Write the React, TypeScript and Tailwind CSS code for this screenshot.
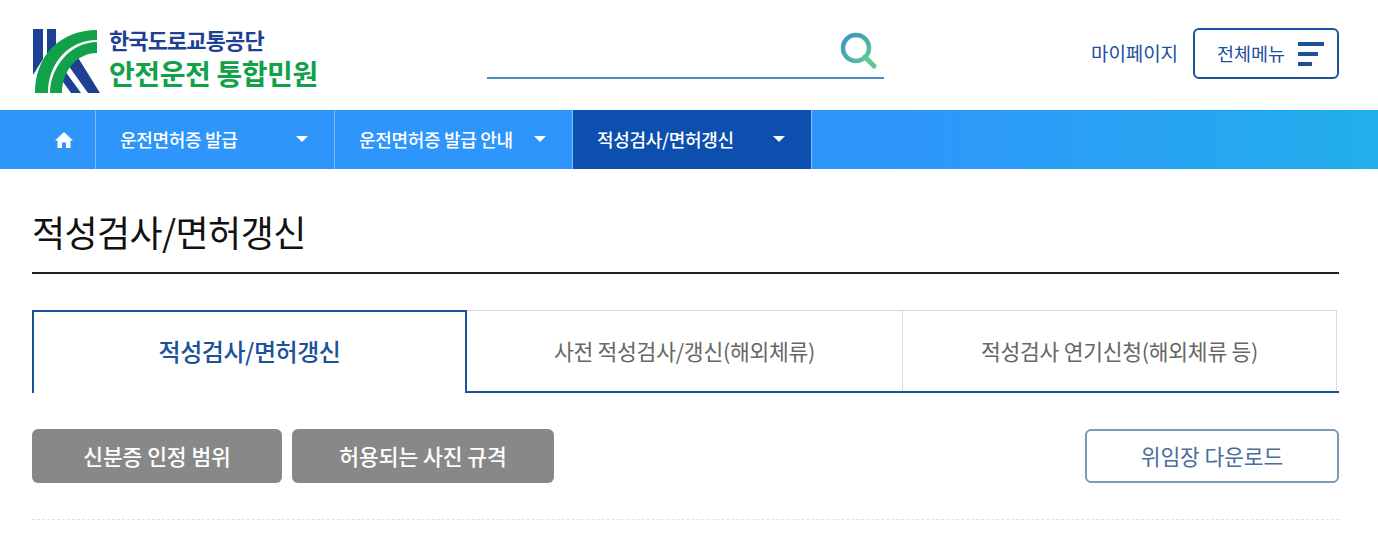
import React from 'react';

const FONT = 'font-["Noto_Sans_CJK_KR","Noto_Sans",sans-serif]';

const Logo = () => (
  <svg width="68" height="64" viewBox="0 0 68 64" className="shrink-0">
    <polygon points="0,0 10,0 10,30 0,46" fill="#1d3f94" />
    <polygon points="14,0 23,0 23,22 14,29" fill="#1d3f94" />
    <polygon points="44,27 67,64 55,64 35,36" fill="#1d3f94" />
    <polygon points="32,42 48,64 38,64 28,50" fill="#1d3f94" />
    <path d="M2 64 C2 26 28 1 64 1 V11 C36 11 15 34 15 64 Z" fill="#12a14b" />
    <path d="M17 64 C17 38 38 13 64 13 V24 C44 24 29 42 29 64 Z" fill="#12a14b" />
  </svg>
);

const Caret = () => <span className="w-0 h-0 border-x-[6px] border-x-transparent border-t-[6px] border-t-white" />;

const NavItem = ({ label, width, active }: { label: string; width: string; active?: boolean }) => (
  <div className={`${width} h-full flex items-center justify-between pl-[24px] border-r border-[#7dbcfb] ${active ? 'bg-[#0d4fae]' : ''}`}>
    <span className="text-[18px] font-medium text-white tracking-[-0.3px] whitespace-nowrap">{label}</span>
    <span className="mr-[26px] flex mb-0.5"><Caret /></span>
  </div>
);

export default function App() {
  return (
    <div className={`w-[1378px] h-[554px] bg-white overflow-hidden ${FONT}`}>
      <header className="h-[110px] pl-[33px] pr-[39px] flex items-start">
        <div className="flex items-start pt-[29px] w-[454px]">
          <Logo />
          <div className="ml-[8px] -mt-[5px]">
            <div className="text-[22px] leading-[30px] font-bold text-[#1d3f94] tracking-[-0.9px]">한국도로교통공단</div>
            <div className="text-[28px] leading-[38px] font-bold text-[#12a14b] tracking-[-0.4px] whitespace-nowrap">안전운전 통합민원</div>
          </div>
        </div>
        <div className="w-[397px] h-[79px] mt-0 border-b-2 border-[#4a8fc0] flex items-end justify-end pr-[6px] pb-[7px]">
          <svg width="38" height="38" viewBox="0 0 38 38">
            <defs>
              <linearGradient id="sg" x1="0" y1="0" x2="1" y2="1">
                <stop offset="0" stopColor="#3f8fc4" />
                <stop offset="1" stopColor="#5cc694" />
              </linearGradient>
            </defs>
            <circle cx="16" cy="16" r="13" fill="none" stroke="url(#sg)" strokeWidth="4.5" />
            <path d="M25 25 L34 34" stroke="#5cc694" strokeWidth="5" strokeLinecap="round" />
          </svg>
        </div>
        <div className="ml-auto flex items-center h-[51px] mt-[28px]">
          <span className="text-[19px] text-[#1c4f9c] mr-[15px] tracking-[-0.1px] whitespace-nowrap">마이페이지</span>
          <div className="w-[146px] h-[51px] border-2 border-[#1c5299] rounded-[6px] flex items-center pl-[22px]">
            <span className="text-[18.5px] text-[#1c4f9c] whitespace-nowrap">전체메뉴</span>
            <span className="ml-[13px] flex flex-col gap-[6px]">
              <span className="block w-[26px] h-[4px] bg-[#1c5299]" />
              <span className="block w-[20px] h-[4px] bg-[#1c5299]" />
              <span className="block w-[14px] h-[4px] bg-[#1c5299]" />
            </span>
          </div>
        </div>
      </header>

      <nav className="h-[59px] pl-[32px] flex bg-gradient-to-r from-[#2e96fb] from-65% to-[#22aeeb]">
        <div className="w-[64px] h-full flex items-center justify-center border-r border-[#7dbcfb]">
          <svg width="18" height="16" viewBox="0 0 18 16" fill="white">
            <path d="M9 0 L18 8.5 H15.5 V16 H11 V10.5 H7 V16 H2.5 V8.5 H0 Z" />
          </svg>
        </div>
        <NavItem label="운전면허증 발급" width="w-[239px]" />
        <NavItem label="운전면허증 발급 안내" width="w-[238px]" />
        <NavItem label="적성검사/면허갱신" width="w-[239px]" active />
      </nav>

      <main className="px-[32px] pr-[39px]">
        <h1 className="h-[105px] border-b-2 border-[#222] pt-[36px] text-[36px] leading-[52px] text-[#111] tracking-[-0.6px]">적성검사/면허갱신</h1>

        <div className="mt-[36px] h-[83px] flex border-b-2 border-[#1c5299] relative">
          <div className="w-[435px] h-[83px] -mb-[2px] z-10 bg-white border-2 border-b-0 border-[#1c5299] flex items-center justify-center text-[24px] font-medium text-[#1c5299] tracking-[-0.45px] pb-[4px]">적성검사/면허갱신</div>
          <div className="w-[436px] h-[81px] border-t border-r border-[#d9d9d9] flex items-center justify-center text-[21.5px] text-[#666] tracking-[-0.25px]">사전 적성검사/갱신(해외체류)</div>
          <div className="w-[434px] h-[81px] border-t border-r border-[#d9d9d9] flex items-center justify-center text-[21.5px] text-[#666] tracking-[-0.25px]">적성검사 연기신청(해외체류 등)</div>
        </div>

        <div className="mt-[36px] flex gap-[10px]">
          <div className="w-[250px] h-[54px] rounded-[6px] bg-[#888] flex items-center justify-center text-white text-[21.5px] font-medium tracking-[-0.05px]">신분증 인정 범위</div>
          <div className="w-[262px] h-[54px] rounded-[6px] bg-[#888] flex items-center justify-center text-white text-[21.5px] font-medium tracking-[-0.05px]">허용되는 사진 규격</div>
          <div className="ml-auto w-[254px] h-[54px] rounded-[6px] border-2 border-[#7f99b8] flex items-center justify-center text-[#4a6d9c] text-[21.5px] tracking-[-0.1px]">위임장 다운로드</div>
        </div>

        <div className="mt-[36px] border-t border-dashed border-[#e2e2e2]" />
      </main>
    </div>
  );
}
